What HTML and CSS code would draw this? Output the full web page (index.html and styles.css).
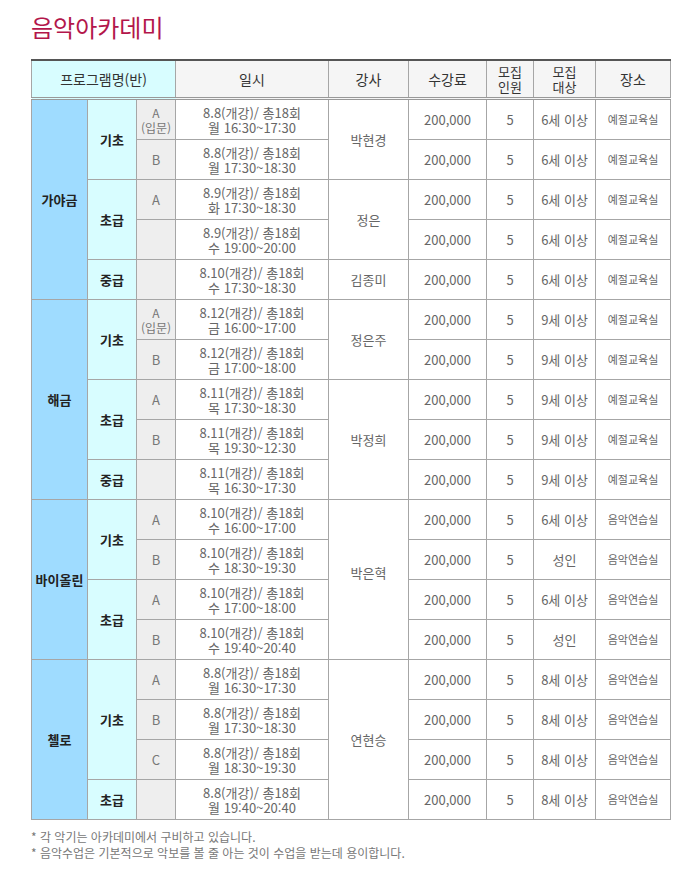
FILE: index.html
```html
<!DOCTYPE html>
<html lang="ko">
<head>
<meta charset="utf-8">
<link rel="stylesheet" href="styles.css">
</head>
<body>
<div class="page">
<h1 class="title">음악아카데미</h1>
<table class="sched">
<colgroup>
<col class="c1"><col class="c2"><col class="c3"><col class="c4"><col class="c5"><col class="c6"><col class="c7"><col class="c8"><col class="c9">
</colgroup>
<thead>
<tr>
<th colspan="3" class="hprog">프로그램명(반)</th>
<th>일시</th>
<th>강사</th>
<th>수강료</th>
<th class="two">모집<br>인원</th>
<th class="two">모집<br>대상</th>
<th>장소</th>
</tr>
</thead>
<tbody>
<!-- 가야금 -->
<tr>
<td rowspan="5" class="inst">가야금</td>
<td rowspan="2" class="lvl">기초</td>
<td class="cls two">A<br>(입문)</td>
<td class="date">8.8(개강)/ 총18회<br>월 16:30~17:30</td>
<td rowspan="2">박현경</td>
<td>200,000</td><td>5</td><td>6세 이상</td><td class="place">예절교육실</td>
</tr>
<tr>
<td class="cls">B</td>
<td class="date">8.8(개강)/ 총18회<br>월 17:30~18:30</td>
<td>200,000</td><td>5</td><td>6세 이상</td><td class="place">예절교육실</td>
</tr>
<tr>
<td rowspan="2" class="lvl">초급</td>
<td class="cls">A</td>
<td class="date">8.9(개강)/ 총18회<br>화 17:30~18:30</td>
<td rowspan="2">정은</td>
<td>200,000</td><td>5</td><td>6세 이상</td><td class="place">예절교육실</td>
</tr>
<tr>
<td class="cls"></td>
<td class="date">8.9(개강)/ 총18회<br>수 19:00~20:00</td>
<td>200,000</td><td>5</td><td>6세 이상</td><td class="place">예절교육실</td>
</tr>
<tr>
<td class="lvl">중급</td>
<td class="cls"></td>
<td class="date">8.10(개강)/ 총18회<br>수 17:30~18:30</td>
<td>김종미</td>
<td>200,000</td><td>5</td><td>6세 이상</td><td class="place">예절교육실</td>
</tr>
<!-- 해금 -->
<tr>
<td rowspan="5" class="inst">해금</td>
<td rowspan="2" class="lvl">기초</td>
<td class="cls two">A<br>(입문)</td>
<td class="date">8.12(개강)/ 총18회<br>금 16:00~17:00</td>
<td rowspan="2">정은주</td>
<td>200,000</td><td>5</td><td>9세 이상</td><td class="place">예절교육실</td>
</tr>
<tr>
<td class="cls">B</td>
<td class="date">8.12(개강)/ 총18회<br>금 17:00~18:00</td>
<td>200,000</td><td>5</td><td>9세 이상</td><td class="place">예절교육실</td>
</tr>
<tr>
<td rowspan="2" class="lvl">초급</td>
<td class="cls">A</td>
<td class="date">8.11(개강)/ 총18회<br>목 17:30~18:30</td>
<td rowspan="3">박정희</td>
<td>200,000</td><td>5</td><td>9세 이상</td><td class="place">예절교육실</td>
</tr>
<tr>
<td class="cls">B</td>
<td class="date">8.11(개강)/ 총18회<br>목 19:30~12:30</td>
<td>200,000</td><td>5</td><td>9세 이상</td><td class="place">예절교육실</td>
</tr>
<tr>
<td class="lvl">중급</td>
<td class="cls"></td>
<td class="date">8.11(개강)/ 총18회<br>목 16:30~17:30</td>
<td>200,000</td><td>5</td><td>9세 이상</td><td class="place">예절교육실</td>
</tr>
<!-- 바이올린 -->
<tr>
<td rowspan="4" class="inst">바이올린</td>
<td rowspan="2" class="lvl">기초</td>
<td class="cls">A</td>
<td class="date">8.10(개강)/ 총18회<br>수 16:00~17:00</td>
<td rowspan="4" class="up">박은혁</td>
<td>200,000</td><td>5</td><td>6세 이상</td><td class="place">음악연습실</td>
</tr>
<tr>
<td class="cls">B</td>
<td class="date">8.10(개강)/ 총18회<br>수 18:30~19:30</td>
<td>200,000</td><td>5</td><td>성인</td><td class="place">음악연습실</td>
</tr>
<tr>
<td rowspan="2" class="lvl">초급</td>
<td class="cls">A</td>
<td class="date">8.10(개강)/ 총18회<br>수 17:00~18:00</td>
<td>200,000</td><td>5</td><td>6세 이상</td><td class="place">음악연습실</td>
</tr>
<tr>
<td class="cls">B</td>
<td class="date">8.10(개강)/ 총18회<br>수 19:40~20:40</td>
<td>200,000</td><td>5</td><td>성인</td><td class="place">음악연습실</td>
</tr>
<!-- 첼로 -->
<tr>
<td rowspan="4" class="inst">첼로</td>
<td rowspan="3" class="lvl">기초</td>
<td class="cls">A</td>
<td class="date">8.8(개강)/ 총18회<br>월 16:30~17:30</td>
<td rowspan="4">연현승</td>
<td>200,000</td><td>5</td><td>8세 이상</td><td class="place">음악연습실</td>
</tr>
<tr>
<td class="cls">B</td>
<td class="date">8.8(개강)/ 총18회<br>월 17:30~18:30</td>
<td>200,000</td><td>5</td><td>8세 이상</td><td class="place">음악연습실</td>
</tr>
<tr>
<td class="cls">C</td>
<td class="date">8.8(개강)/ 총18회<br>월 18:30~19:30</td>
<td>200,000</td><td>5</td><td>8세 이상</td><td class="place">음악연습실</td>
</tr>
<tr>
<td class="lvl">초급</td>
<td class="cls"></td>
<td class="date">8.8(개강)/ 총18회<br>월 19:40~20:40</td>
<td>200,000</td><td>5</td><td>8세 이상</td><td class="place">음악연습실</td>
</tr>
</tbody>
</table>
<ul class="notes">
<li>* 각 악기는 아카데미에서 구비하고 있습니다.</li>
<li>* 음악수업은 기본적으로 악보를 볼 줄 아는 것이 수업을 받는데 용이합니다.</li>
</ul>
</div>
</body>
</html>
```
FILE: styles.css
```css
html, body {
  margin: 0;
  padding: 0;
  background: #fff;
}
body {
  font-family: "Noto Sans CJK KR", "Noto Sans", sans-serif;
  color: #666;
}
.page {
  padding: 0 0 0 31px;
  width: 639px;
}
.title {
  margin: 0;
  padding-top: 11px;
  height: 59px;
  box-sizing: border-box;
  font-size: 24px;
  line-height: 32px;
  font-weight: 400;
  color: #b3164b;
  letter-spacing: 0;
}
.sched {
  width: 639px;
  border-collapse: collapse;
  table-layout: fixed;
  border-top: 2px solid #555;
  border-bottom: 1px solid #777;
}
.c1 { width: 56px; }
.c2 { width: 49px; }
.c3 { width: 39px; }
.c4 { width: 153px; }
.c5 { width: 80px; }
.c6 { width: 78px; }
.c7 { width: 47px; }
.c8 { width: 62px; }
.c9 { width: 75px; }
.sched th, .sched td {
  border: 1px solid #a6a6a6;
  padding: 0;
  text-align: center;
  vertical-align: middle;
}
.sched th {
  height: 36px;
  background: #f5f5f5;
  color: #333;
  font-size: 14px;
  font-weight: 400;
  line-height: 17px;
  border-bottom: 3px double #999;
}
.sched th.two {
  font-size: 13px;
  line-height: 15px;
}
.sched th.hprog {
  background: #d8fdff;
}
.sched td {
  height: 39px;
  font-size: 13px;
  line-height: 15px;
  color: #666;
}
.sched td.inst {
  background: #9fdcff;
  color: #222;
  font-weight: 700;
  font-size: 13px;
}
.sched td.lvl {
  background: #d8fdff;
  color: #222;
  font-weight: 700;
  font-size: 13px;
}
.sched td.cls {
  background: #eeeeee;
  color: #777;
}
.sched td.cls.two {
  font-size: 12px;
  line-height: 15px;
}
.sched td.date {
  border-left: 1px solid #444;
}
.sched td.place {
  font-size: 11px;
}
.sched td.up {
  padding-bottom: 14px;
}
.notes {
  list-style: none;
  margin: 9px 0 0;
  padding: 0;
  font-size: 12px;
  line-height: 16px;
  color: #777;
}
```
